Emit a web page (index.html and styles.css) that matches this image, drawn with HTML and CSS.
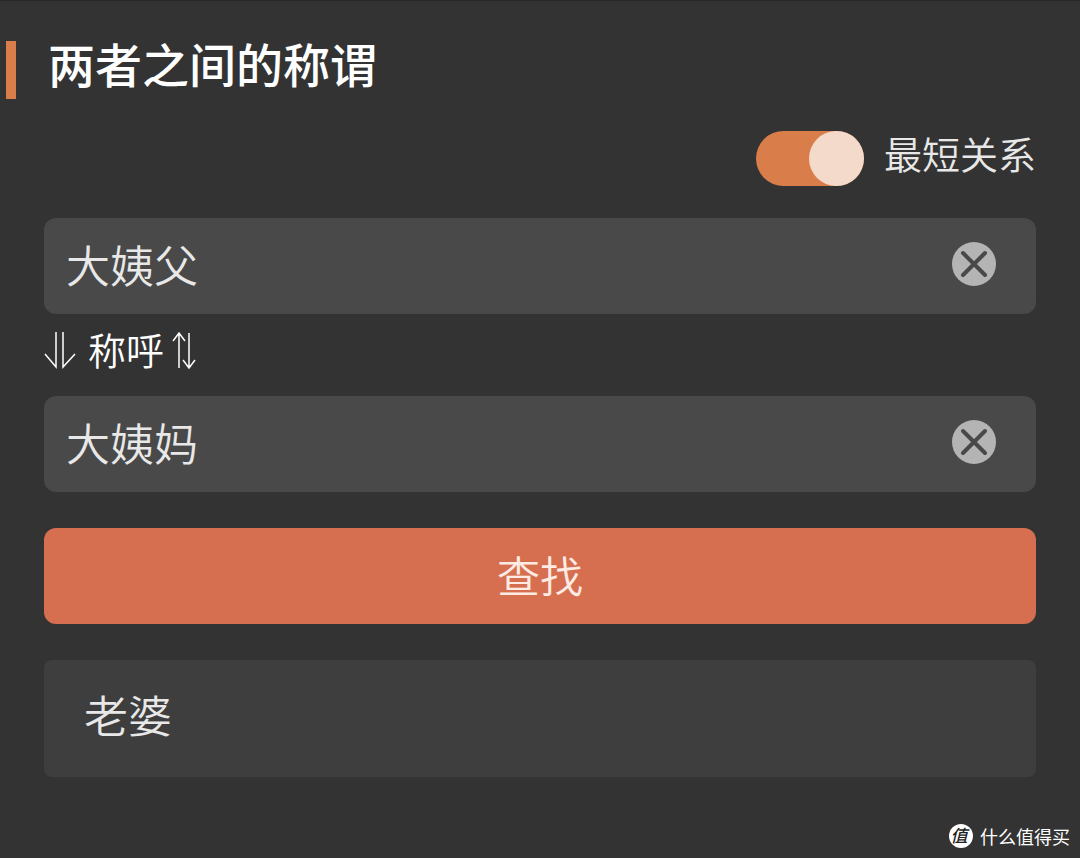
FILE: index.html
```html
<!DOCTYPE html>
<html lang="zh-CN">
<head>
  <meta charset="UTF-8">
  <meta name="viewport" content="width=device-width, initial-scale=1.0">
  <title>两者之间的称谓</title>
  <link rel="stylesheet" href="styles.css">
</head>
<body>
  <main class="page">
    <h1 class="title">两者之间的称谓</h1>

    <form class="form">
      <div class="option">
        <input type="checkbox" class="switch" id="shortest" checked>
        <label class="option-label" for="shortest">最短关系</label>
      </div>

      <div class="field">
        <input type="text" class="field-input" id="from" value="大姨父" aria-label="称谓一">
        <button type="button" class="clear" aria-label="清空">
          <svg viewBox="0 0 44 44"><path d="M11 11 L33 33 M33 11 L11 33"/></svg>
        </button>
      </div>

      <div class="relation">
        <svg class="arrow-down" viewBox="0 0 32 38"><path d="M12 0 V35 L1 22 M19 0 V35 L31 22"/></svg>
        <span>称呼</span>
        <button type="button" class="swap" aria-label="交换">
          <svg viewBox="0 0 24 38"><path d="M7 36 V1 M1 9 L7 1 L13 9 M17 1 V36 M11 28 L17 36 L23 28"/></svg>
        </button>
      </div>

      <div class="field">
        <input type="text" class="field-input" id="to" value="大姨妈" aria-label="称谓二">
        <button type="button" class="clear" aria-label="清空">
          <svg viewBox="0 0 44 44"><path d="M11 11 L33 33 M33 11 L11 33"/></svg>
        </button>
      </div>

      <button type="button" class="submit">查找</button>
      <output class="result" for="from to">老婆</output>
    </form>

    <footer class="brand">
      <span class="brand-logo">值</span>
      <span>什么值得买</span>
    </footer>
  </main>

  <script>
    document.querySelectorAll('.clear').forEach(button => {
      button.addEventListener('click', () => {
        button.previousElementSibling.value = '';
      });
    });

    // 交换两个称谓
    document.querySelector('.swap').addEventListener('click', () => {
      const from = document.getElementById('from');
      const to = document.getElementById('to');
      [from.value, to.value] = [to.value, from.value];
    });
  </script>
</body>
</html>
```
FILE: styles.css
```css
* {
  box-sizing: border-box;
}

body {
  margin: 0;
  background: #333;
  color: #e8e8e8;
  font-family: "Noto Sans CJK SC", sans-serif;
  font-weight: 350;
}

button,
input {
  font: inherit;
  color: inherit;
  border: 0;
}

button {
  padding: 0;
  cursor: pointer;
}

svg {
  display: block;
  fill: none;
  stroke: currentColor;
}

.page {
  display: flex;
  flex-direction: column;
  min-height: 100vh;
  padding-top: 40px;
  border-top: 1px solid #282828;
}

.title {
  margin: 0 0 32px 6px;
  padding: 0 0 14px 32px;
  border-left: 10px solid #d97e4b;
  color: #fff;
  font-size: 47px;
  font-weight: 500;
  line-height: 44px;
}

.form {
  display: flex;
  flex-direction: column;
  padding: 0 44px;
}

.option {
  display: flex;
  justify-content: flex-end;
  align-items: flex-start;
  gap: 20px;
  margin-bottom: 32px;
}

.option-label {
  font-size: 38px;
  line-height: 44px;
}

.switch {
  appearance: none;
  width: 108px;
  height: 55px;
  margin: 0;
  border-radius: 28px;
  background: #d97e4b;
  cursor: pointer;
}

.switch::before {
  content: "";
  display: block;
  width: 55px;
  height: 55px;
  border-radius: 50%;
  background: #f4dacb;
}

.switch:checked::before {
  margin-left: auto;
}

.field {
  display: flex;
  align-items: center;
  height: 96px;
  padding: 0 40px 4px 22px;
  border-radius: 12px;
  background: #494949;
}

.field-input {
  flex: 1;
  min-width: 0;
  padding: 0;
  background: none;
  font-size: 44px;
  line-height: 64px;
  outline: none;
}

.clear {
  width: 44px;
  height: 44px;
  border-radius: 50%;
  background: #b4b4b4;
  color: #494949;
}

.clear svg {
  stroke-width: 4;
  stroke-linecap: round;
}

.relation {
  display: flex;
  align-items: center;
  height: 82px;
  padding-bottom: 8px;
  color: #fff;
  font-size: 38px;
  line-height: 56px;
}

.relation svg {
  stroke-width: 1.5;
}

.relation span {
  margin: 0 8px 0 12px;
  padding-bottom: 4px;
}

.arrow-down {
  width: 32px;
  height: 38px;
}

.swap {
  width: 24px;
  height: 38px;
  background: none;
}

.submit {
  height: 96px;
  margin: 36px 0;
  padding-bottom: 4px;
  border-radius: 12px;
  background: #d66f50;
  color: #fdebe4;
  font-size: 43px;
  line-height: 64px;
}

.result {
  min-height: 117px;
  padding: 22px 40px;
  border-radius: 8px;
  background: #3e3e3e;
  font-size: 44px;
  line-height: 64px;
}

.brand {
  display: flex;
  justify-content: flex-end;
  align-items: center;
  gap: 7px;
  margin-top: auto;
  padding: 10px;
  color: #fff;
  font-size: 18px;
  line-height: 24px;
  font-weight: 400;
}

.brand-logo {
  width: 24px;
  height: 24px;
  padding-right: 4px;
  border-radius: 50%;
  background: #fff;
  color: #222;
  font-size: 17px;
  font-style: italic;
  font-weight: 500;
  line-height: 22px;
  text-align: center;
}
```
